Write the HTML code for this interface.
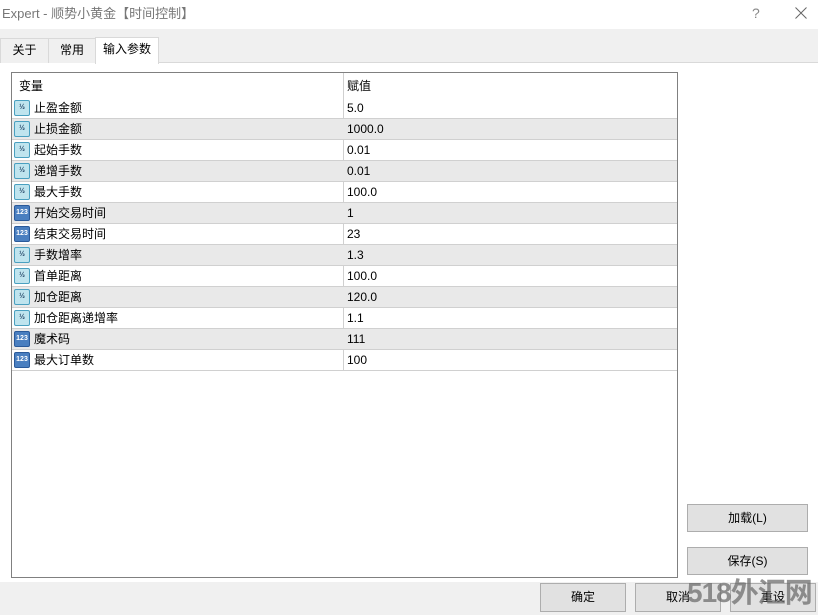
<!DOCTYPE html>
<html><head><meta charset="utf-8"><style>
*{margin:0;padding:0;box-sizing:border-box}
body{width:818px;height:615px;position:relative;background:#fff;font-family:"Liberation Sans","Noto Sans CJK SC",sans-serif;font-size:12px;color:#000;overflow:hidden}
.a{position:absolute;white-space:nowrap}
.title{left:2px;top:5px;color:#777;font-size:13px;line-height:18px}
.strip{left:0;top:29px;width:818px;height:34px;background:#f0f0f0;border-bottom:1px solid #d9d9d9}
.tab{top:38px;height:25px;background:#f0f0f0;border:1px solid #d9d9d9;border-bottom:none;line-height:22px;text-align:center}
.box{left:11px;top:72px;width:667px;height:506px;border:1px solid #808080;background:#fff}
.row{position:absolute;left:0;width:665px;height:21px;border-bottom:1px solid #d0d0d0}
.row.g{background:#e9e9e9}
.row span{position:absolute;top:0;line-height:20px}
.n{left:22px}.v{left:335px}
.ic{position:absolute;left:2px;top:2px;width:16px;height:16px;border-radius:2px;font-size:7px;line-height:14px;text-align:center;font-weight:bold}
.f{background:#bfe4ee;border:1px solid #4aa0c0;color:#246}
.i{background:#4a7fc0;border:1px solid #2a5a9a;color:#fff}
.vl{position:absolute;left:331px;top:0;width:1px;height:298px;background:#d0d0d0}
.btn{background:#e1e1e1;border:1px solid #adadad;text-align:center;line-height:26px;font-size:12px}
.bot{left:0;top:582px;width:818px;height:33px;background:#f0f0f0}
</style></head><body>
<div class="a title">Expert - 顺势小黄金【时间控制】</div>
<div class="a" style="left:752px;top:4px;color:#888;font-size:14px;line-height:18px">?</div>
<svg class="a" style="left:795px;top:7px" width="12" height="12"><path d="M0.5 0.5L11.5 11.5M11.5 0.5L0.5 11.5" stroke="#666" stroke-width="1"/></svg>
<div class="a strip"></div>
<div class="a tab" style="left:0;width:49px">关于</div>
<div class="a tab" style="left:48px;width:48px">常用</div>
<div class="a tab" style="left:95px;width:64px;background:#fff;top:37px;height:27px">输入参数</div>
<div class="a box">
<div class="vl"></div>
<div class="row" style="top:0;height:25px;border-bottom:none"><span class="n" style="left:7px;top:3px">变量</span><span class="v" style="top:3px">赋值</span></div>
<div class="row" style="top:25px"><div class="ic f">½</div><span class="n">止盈金额</span><span class="v">5.0</span></div>
<div class="row g" style="top:46px"><div class="ic f">½</div><span class="n">止损金额</span><span class="v">1000.0</span></div>
<div class="row" style="top:67px"><div class="ic f">½</div><span class="n">起始手数</span><span class="v">0.01</span></div>
<div class="row g" style="top:88px"><div class="ic f">½</div><span class="n">递增手数</span><span class="v">0.01</span></div>
<div class="row" style="top:109px"><div class="ic f">½</div><span class="n">最大手数</span><span class="v">100.0</span></div>
<div class="row g" style="top:130px"><div class="ic i">123</div><span class="n">开始交易时间</span><span class="v">1</span></div>
<div class="row" style="top:151px"><div class="ic i">123</div><span class="n">结束交易时间</span><span class="v">23</span></div>
<div class="row g" style="top:172px"><div class="ic f">½</div><span class="n">手数增率</span><span class="v">1.3</span></div>
<div class="row" style="top:193px"><div class="ic f">½</div><span class="n">首单距离</span><span class="v">100.0</span></div>
<div class="row g" style="top:214px"><div class="ic f">½</div><span class="n">加仓距离</span><span class="v">120.0</span></div>
<div class="row" style="top:235px"><div class="ic f">½</div><span class="n">加仓距离递增率</span><span class="v">1.1</span></div>
<div class="row g" style="top:256px"><div class="ic i">123</div><span class="n">魔术码</span><span class="v">111</span></div>
<div class="row" style="top:277px"><div class="ic i">123</div><span class="n">最大订单数</span><span class="v">100</span></div>
</div>
<div class="a btn" style="left:687px;top:504px;width:121px;height:28px">加载(L)</div>
<div class="a btn" style="left:687px;top:547px;width:121px;height:28px">保存(S)</div>
<div class="a bot"></div>
<div class="a btn" style="left:540px;top:583px;width:86px;height:29px">确定</div>
<div class="a btn" style="left:635px;top:583px;width:86px;height:29px">取消</div>
<div class="a btn" style="left:730px;top:583px;width:86px;height:29px">重设</div>
<div class="a" style="left:687px;top:576px;font-size:28px;line-height:34px;font-weight:bold;color:rgba(110,110,110,0.75);letter-spacing:-1px">518外汇网</div>
</body></html>
